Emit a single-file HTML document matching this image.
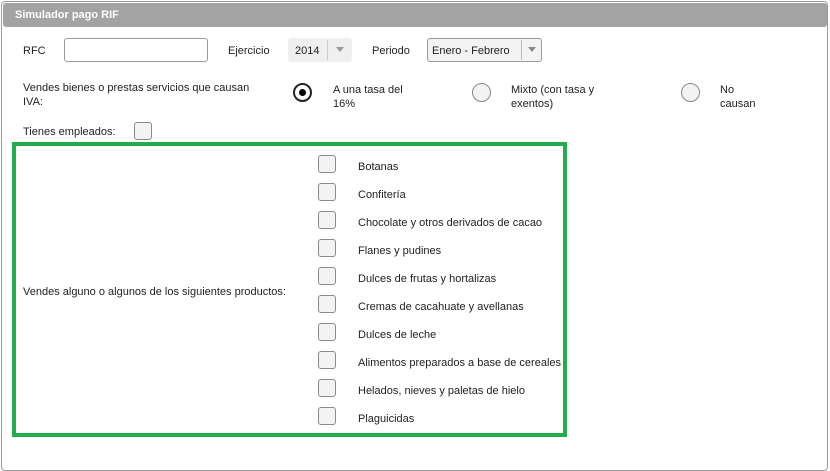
<!DOCTYPE html>
<html><head><meta charset="utf-8"><style>
*{box-sizing:border-box;margin:0;padding:0}
body{width:830px;height:450px;background:#fff;font-family:"Liberation Sans",Arial,sans-serif;font-size:11px;color:#222;position:relative;overflow:hidden}
.a{position:absolute}
.panel{left:1px;top:1px;width:827px;height:470px;border:1px solid #9a9a9a;border-radius:4px}
.hdr{left:3px;top:3px;width:824px;height:24px;background:#a3a3a3;border-radius:3px;color:#fff;font-weight:bold;font-size:11px;padding:6px 0 0 12px}
.inp{border:1px solid #999;border-radius:3px;background:#fff}
.cb{width:18px;height:18px;border:1px solid #8a8a8a;border-radius:3px;background:#f3f3f3}
.rd{width:19px;height:19px;border:1px solid #888;border-radius:50%;background:#f3f3f3}
.green{left:12px;top:142px;width:555px;height:295px;border:4px solid #22ac4b}
.lbl{left:358px}
</style></head><body>
<div class="a panel"></div>
<div class="a hdr">Simulador pago RIF</div>
<div class="a" style="left:23px;top:45px">RFC</div>
<div class="a inp" style="left:64px;top:38px;width:144px;height:24px"></div>
<div class="a" style="left:228px;top:45px">Ejercicio</div>
<div class="a" style="left:288px;top:38px;width:64px;height:24px;background:#efefef;border-radius:3px"></div>
<div class="a" style="left:295px;top:45px">2014</div>
<div class="a" style="left:327px;top:40px;width:1px;height:20px;background:#ccc"></div>
<div class="a" style="left:336px;top:47px;border:4px solid transparent;border-top:5px solid #999"></div>
<div class="a" style="left:372px;top:45px">Periodo</div>
<div class="a inp" style="left:427px;top:38px;width:115px;height:24px;background:#f3f3f3"></div>
<div class="a" style="left:432px;top:45px">Enero - Febrero</div>
<div class="a" style="left:521px;top:40px;width:1px;height:20px;background:#bbb"></div>
<div class="a" style="left:528px;top:47px;border:4px solid transparent;border-top:5px solid #888"></div>
<div class="a" style="left:23px;top:81px;line-height:14px">Vendes bienes o prestas servicios que causan<br>IVA:</div>
<div class="a rd" style="left:293px;top:83px;border:2px solid #222;background:#fff"></div>
<div class="a" style="left:299px;top:89px;width:7px;height:7px;border-radius:50%;background:#000"></div>
<div class="a" style="left:333px;top:83px;line-height:14px">A una tasa del<br>16%</div>
<div class="a rd" style="left:472px;top:83px"></div>
<div class="a" style="left:511px;top:83px;line-height:14px">Mixto (con tasa y<br>exentos)</div>
<div class="a rd" style="left:681px;top:83px"></div>
<div class="a" style="left:720px;top:83px;line-height:14px">No<br>causan</div>
<div class="a" style="left:23px;top:126px">Tienes empleados:</div>
<div class="a cb" style="left:134px;top:122px"></div>
<div class="a green"></div>
<div class="a" style="left:23px;top:286px">Vendes alguno o algunos de los siguientes productos:</div>
<div class="a cb" style="left:318px;top:155px"></div><div class="a lbl" style="top:161px">Botanas</div>
<div class="a cb" style="left:318px;top:183px"></div><div class="a lbl" style="top:189px">Confitería</div>
<div class="a cb" style="left:318px;top:211px"></div><div class="a lbl" style="top:217px">Chocolate y otros derivados de cacao</div>
<div class="a cb" style="left:318px;top:239px"></div><div class="a lbl" style="top:245px">Flanes y pudines</div>
<div class="a cb" style="left:318px;top:267px"></div><div class="a lbl" style="top:273px">Dulces de frutas y hortalizas</div>
<div class="a cb" style="left:318px;top:295px"></div><div class="a lbl" style="top:301px">Cremas de cacahuate y avellanas</div>
<div class="a cb" style="left:318px;top:323px"></div><div class="a lbl" style="top:329px">Dulces de leche</div>
<div class="a cb" style="left:318px;top:351px"></div><div class="a lbl" style="top:357px">Alimentos preparados a base de cereales</div>
<div class="a cb" style="left:318px;top:379px"></div><div class="a lbl" style="top:385px">Helados, nieves y paletas de hielo</div>
<div class="a cb" style="left:318px;top:407px"></div><div class="a lbl" style="top:413px">Plaguicidas</div>
</body></html>
